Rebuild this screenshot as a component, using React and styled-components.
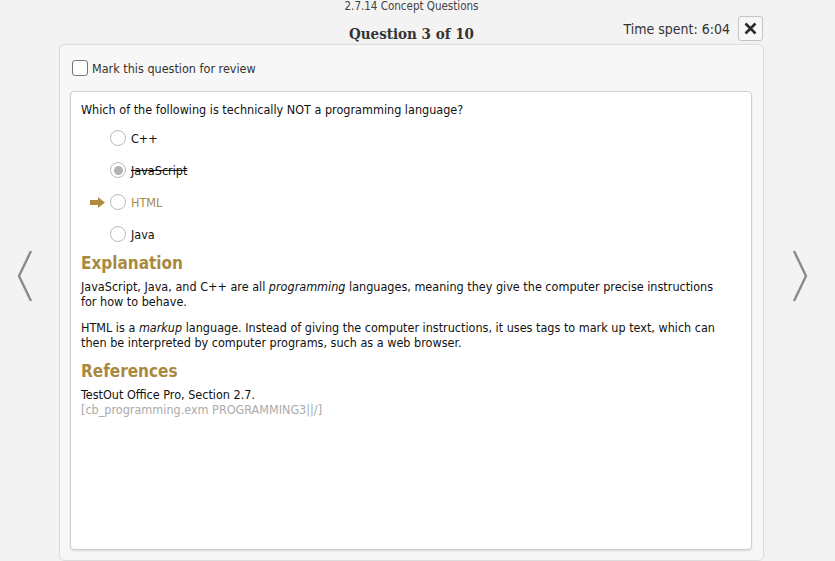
import React from 'react';
import styled, { createGlobalStyle } from 'styled-components';

const GlobalStyle = createGlobalStyle`
  html, body {
    margin: 0;
    padding: 0;
    background: #f3f3f3;
    font-family: "DejaVu Sans Condensed", "DejaVu Sans", sans-serif;
    color: #222;
  }
  #root {
    height: 561px;
    overflow: hidden;
  }
`;

const Page = styled.div`
  display: grid;
  grid-template-columns: 59px 705px 1fr;
  height: 561px;
`;

const NavSide = styled.div`
  display: flex;
  align-items: center;
  justify-content: flex-start;
  padding-left: ${props => (props.right ? '28px' : '17px')};
  padding-bottom: 9px;
`;

const NavArrow = styled.button`
  background: none;
  border: none;
  padding: 0;
  cursor: pointer;
  display: flex;
`;

const Center = styled.div`
  display: flex;
  flex-direction: column;
`;

const LessonTitle = styled.div`
  text-align: center;
  font-size: 11.5px;
  line-height: 12px;
  color: #444;
  height: 14px;
`;

const HeaderRow = styled.div`
  display: grid;
  grid-template-columns: 1fr auto 1fr;
  align-items: center;
  height: 30px;
`;

const QuestionCount = styled.div`
  font-family: "DejaVu Serif Condensed", "DejaVu Serif", serif;
  font-weight: bold;
  font-size: 15px;
  color: #333;
  padding-top: 9px;
`;

const Timer = styled.div`
  display: flex;
  justify-content: flex-end;
  align-items: center;
  gap: 8px;
  font-size: 14px;
  color: #333;
`;

const CloseButton = styled.button`
  width: 25px;
  height: 25px;
  border: 1px solid #c4c4c4;
  border-radius: 3px;
  background: #f7f7f7;
  display: flex;
  align-items: center;
  justify-content: center;
  padding: 0;
  margin-right: 1px;
  margin-bottom: 2px;
`;

const Panel = styled.div`
  flex: 1;
  background: #f7f7f7;
  border: 1px solid #dcdcdc;
  border-radius: 6px;
  padding: 14px 11px 10px 10px;
  display: flex;
  flex-direction: column;
  box-shadow: 0 0 2px rgba(0, 0, 0, 0.05);
`;

const ReviewLabel = styled.label`
  display: flex;
  align-items: center;
  gap: 4px;
  font-size: 12.5px;
  color: #333;
  margin-left: 2px;
  height: 18px;
`;

const CheckBox = styled.span`
  width: 16px;
  height: 16px;
  border: 1px solid #777;
  border-radius: 3px;
  background: #fff;
  box-sizing: border-box;
`;

const Card = styled.div`
  margin-top: 14px;
  height: 459px;
  background: #fff;
  border: 1px solid #cfcfcf;
  border-radius: 4px;
  box-shadow: 0 1px 2px rgba(0, 0, 0, 0.12);
  padding: 10px 10px;
  box-sizing: border-box;
  font-size: 12.5px;
  line-height: 15px;
`;

const Prompt = styled.div`
  color: #111;
`;

const Options = styled.div`
  display: flex;
  flex-direction: column;
  margin-top: 5px;
`;

const OptionRow = styled.div`
  display: flex;
  align-items: center;
  height: 32px;
  padding-left: 8px;
`;

const Pointer = styled.span`
  width: 21px;
  display: flex;
  align-items: center;
  padding-left: 1px;
  box-sizing: border-box;
`;

const Radio = styled.span`
  width: 16px;
  height: 16px;
  border-radius: 50%;
  border: 1px solid #bbb;
  box-sizing: border-box;
  background: #fff;
  margin-right: 5px;
  display: flex;
  align-items: center;
  justify-content: center;
  &::after {
    content: '';
    width: 9px;
    height: 9px;
    border-radius: 50%;
    background: ${props => (props.checked ? '#b3b3b3' : 'transparent')};
  }
`;

const OptionText = styled.span`
  color: ${props => (props.correct ? '#a78a48' : '#111')};
  text-decoration: ${props => (props.struck ? 'line-through' : 'none')};
`;

const SectionHeading = styled.h3`
  margin: ${props => props.top || '3px'} 0 6px;
  font-size: 17px;
  line-height: 20px;
  font-weight: bold;
  color: #a8893f;
`;

const Paragraph = styled.p`
  margin: 0 0 11px;
  color: #111;
  max-width: 640px;
  em {
    font-style: italic;
  }
`;

const RefLine = styled.div`
  color: ${props => (props.muted ? '#aaa' : '#111')};
`;

const options = [
  { text: 'C++' },
  { text: 'JavaScript', checked: true, struck: true },
  { text: 'HTML', correct: true },
  { text: 'Java' },
];

const Chevron = ({ dir }) => (
  <svg width="16" height="54" viewBox="0 0 16 54">
    <polyline
      points={dir === 'left' ? '14,2 2,27 14,52' : '2,2 14,27 2,52'}
      fill="none"
      stroke="#8a8a8a"
      strokeWidth="2.4"
      strokeLinejoin="round"
    />
  </svg>
);

export default function App() {
  return (
    <>
      <GlobalStyle />
      <Page>
        <NavSide>
          <NavArrow aria-label="Previous"><Chevron dir="left" /></NavArrow>
        </NavSide>
        <Center>
          <LessonTitle>2.7.14 Concept Questions</LessonTitle>
          <HeaderRow>
            <span />
            <QuestionCount>Question 3 of 10</QuestionCount>
            <Timer>
              <span>Time spent: 6:04</span>
              <CloseButton aria-label="Close">
                <svg width="13" height="13" viewBox="0 0 13 13">
                  <path d="M1.5 1.5 L11.5 11.5 M11.5 1.5 L1.5 11.5" stroke="#2a2a2a" strokeWidth="2.6" />
                </svg>
              </CloseButton>
            </Timer>
          </HeaderRow>
          <Panel>
            <ReviewLabel>
              <CheckBox />
              Mark this question for review
            </ReviewLabel>
            <Card>
              <Prompt>Which of the following is technically NOT a programming language?</Prompt>
              <Options>
                {options.map(o => (
                  <OptionRow key={o.text}>
                    <Pointer>
                      {o.correct && (
                        <svg width="15" height="11" viewBox="0 0 15 11">
                          <path d="M0 3 H8 V0 L15 5.5 L8 11 V8 H0 Z" fill="#b08d3e" />
                        </svg>
                      )}
                    </Pointer>
                    <Radio checked={o.checked} />
                    <OptionText correct={o.correct} struck={o.struck}>{o.text}</OptionText>
                  </OptionRow>
                ))}
              </Options>
              <SectionHeading>Explanation</SectionHeading>
              <Paragraph>
                JavaScript, Java, and C++ are all <em>programming</em> languages, meaning they give the computer precise instructions for how to behave.
              </Paragraph>
              <Paragraph>
                HTML is a <em>markup</em> language. Instead of giving the computer instructions, it uses tags to mark up text, which can then be interpreted by computer programs, such as a web browser.
              </Paragraph>
              <SectionHeading top="11px">References</SectionHeading>
              <RefLine>TestOut Office Pro, Section 2.7.</RefLine>
              <RefLine muted>[cb_programming.exm PROGRAMMING3||/]</RefLine>
            </Card>
          </Panel>
        </Center>
        <NavSide right>
          <NavArrow aria-label="Next"><Chevron dir="right" /></NavArrow>
        </NavSide>
      </Page>
    </>
  );
}
